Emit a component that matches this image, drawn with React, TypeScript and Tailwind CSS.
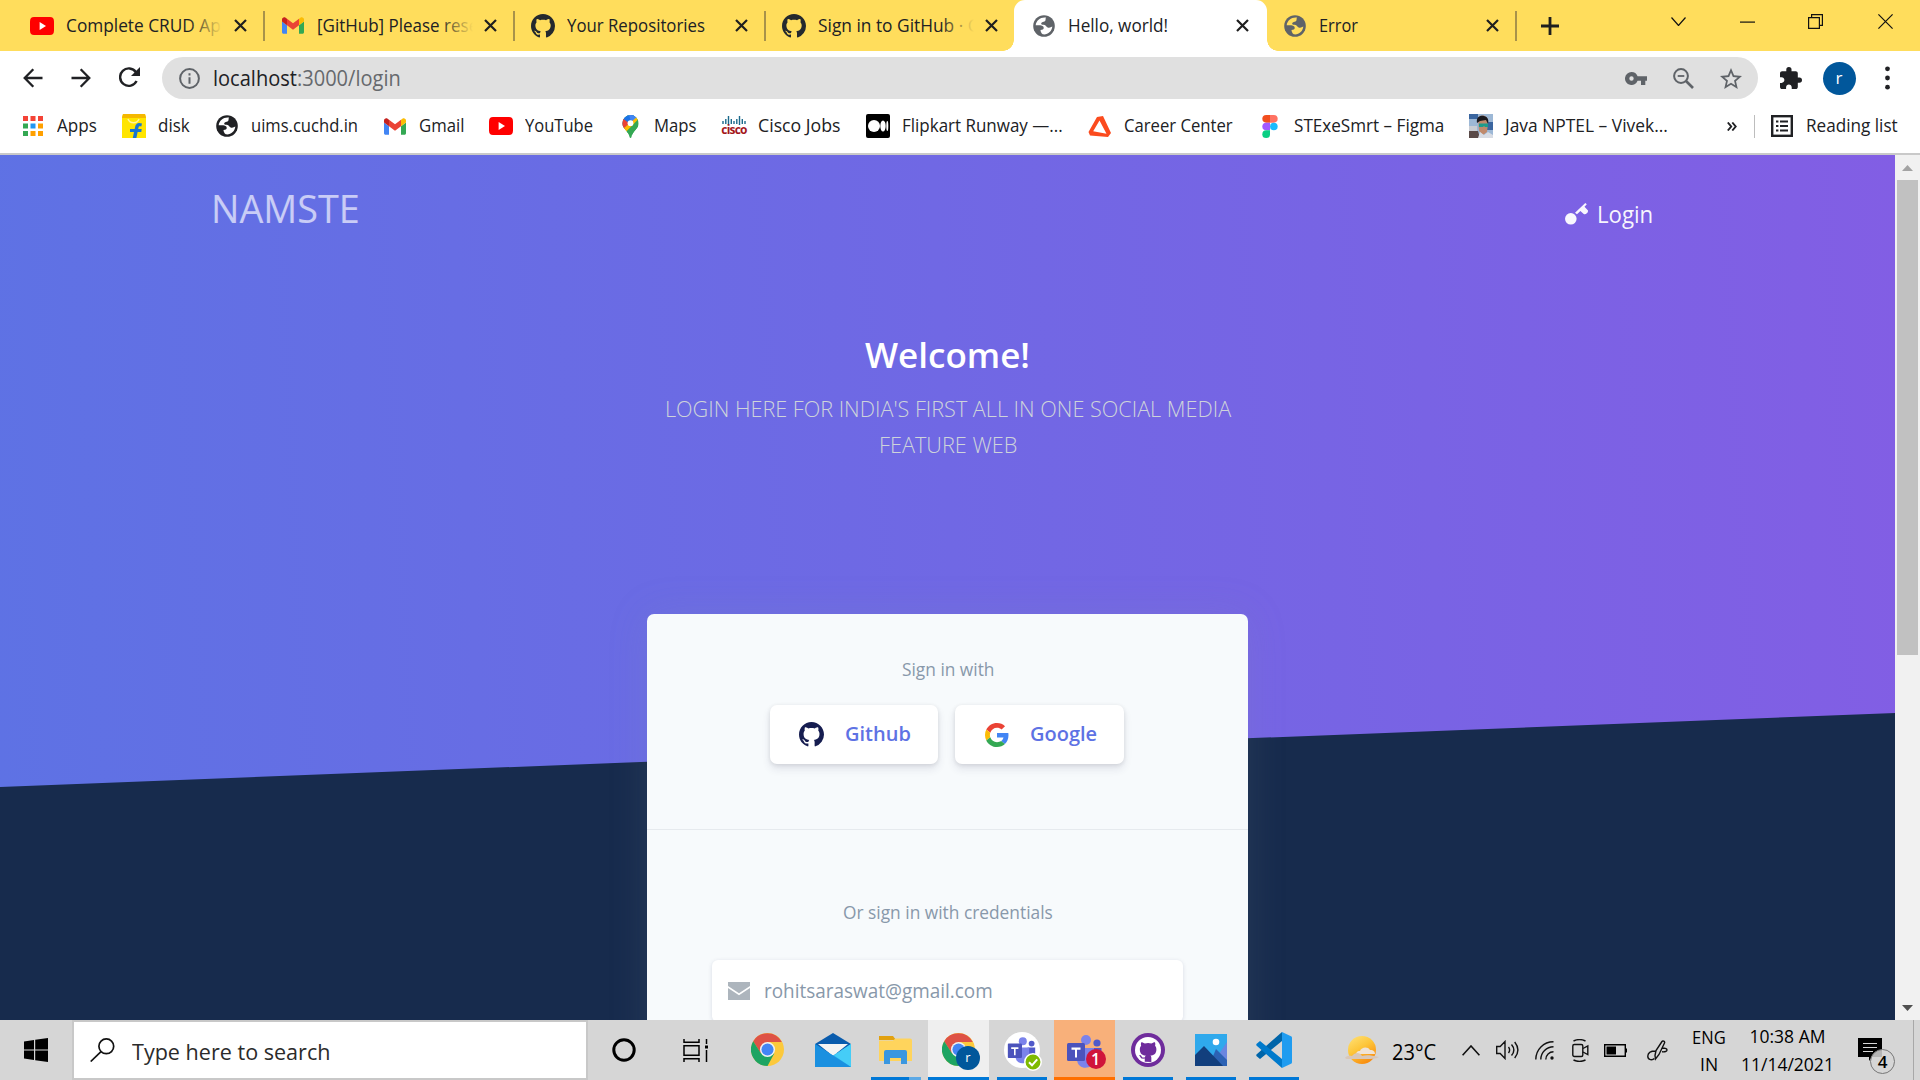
import { useLayoutEffect, useRef, useState } from "react";
import type { ReactNode } from "react";

const MARK =
  "M8 0C3.58 0 0 3.58 0 8c0 3.54 2.29 6.53 5.47 7.59.4.07.55-.17.55-.38 0-.19-.01-.82-.01-1.49-2.01.37-2.53-.49-2.69-.94-.09-.23-.48-.94-.82-1.13-.28-.15-.68-.52-.01-.53.63-.01 1.08.58 1.23.82.72 1.21 1.87.87 2.33.66.07-.52.28-.87.51-1.07-1.78-.2-3.64-.89-3.64-3.95 0-.87.31-1.59.82-2.15-.08-.2-.36-1.02.08-2.12 0 0 .67-.21 2.2.82.64-.18 1.32-.27 2-.27s1.36.09 2 .27c1.53-1.04 2.2-.82 2.2-.82.44 1.1.16 1.92.08 2.12.51.56.82 1.27.82 2.15 0 3.07-1.87 3.75-3.65 3.95.29.25.54.73.54 1.48 0 1.07-.01 1.93-.01 2.2 0 .21.15.46.55.38A8.01 8.01 0 0 0 16 8c0-4.42-3.58-8-8-8z";

/* A single line of text condensed or stretched to a given width. */
function Fit({ w, children, className = "" }: { w: number; children: ReactNode; className?: string }) {
  const ref = useRef<HTMLSpanElement>(null);
  const [k, setK] = useState(1);
  useLayoutEffect(() => {
    if (ref.current && ref.current.offsetWidth) setK(w / ref.current.offsetWidth);
  }, [w]);
  return (
    <span className={`block shrink-0 ${className}`} style={{ width: w }}>
      <span ref={ref} className="inline-block origin-left whitespace-nowrap" style={{ transform: `scaleX(${k})` }}>
        {children}
      </span>
    </span>
  );
}

const YouTube = () => (
  <svg width="24" height="18" viewBox="0 0 24 17" preserveAspectRatio="none">
    <rect width="24" height="17" rx="4" fill="#f00" />
    <path d="M9.600 4.800v7.400L16 8.500z" fill="#fff" />
  </svg>
);

const Gmail = () => (
  <svg width="22" height="17" viewBox="52 42 88 66">
    <path fill="#4285f4" d="M58 108h14V74L52 59v43c0 3.320 2.690 6 6 6" />
    <path fill="#34a853" d="M120 108h14c3.320 0 6-2.690 6-6V59l-20 15" />
    <path fill="#fbbc04" d="M120 48v26l20-15v-8c0-7.420-8.470-11.650-14.400-7.200" />
    <path fill="#ea4335" d="M72 74V48l24 18 24-18v26L96 92" />
    <path fill="#c5221f" d="M52 51v8l20 15V48l-5.600-4.200c-5.940-4.450-14.400-.22-14.400 7.200" />
  </svg>
);

const GitHub = ({ size = 24, color = "#24292e" }: { size?: number; color?: string }) => (
  <svg width={size} height={size} viewBox="0 0 16 16">
    <path fill={color} d={MARK} />
  </svg>
);

const Globe = ({ color, hole }: { color: string; hole: string }) => (
  <svg width="22" height="22" viewBox="0 0 22 22">
    <circle cx="11" cy="11" r="10.800" fill={color} />
    <path
      fill={hole}
      d="M13.200 2.700C8 1.800 3.200 5.300 2.700 10.300c2.100 0 3.900-.3 5.600.1 1.800.4 2.700 1.500 2.400 2.900-.2 1.200-1.200 1.700-3.200 1.700.1 1.600.7 3.200 2.300 4.300 4.900.7 9.200-2.900 9.500-7.700-1.500.9-3.100 1.400-4.700.8-1.500-.6-1.500-1.900-2.900-2.400-1.500-.5-3.200.1-3.500-1.200-.3-1.300 1.300-1.700 2.400-2 1.500-.4 2.100-1.300 2-2.300-.1-.8-.1-1.300.6-1.800z"
    />
  </svg>
);

const Google = () => (
  <svg width="24" height="24" viewBox="0 0 48 48">
    <path fill="#EA4335" d="M24 9.500c3.540 0 6.710 1.220 9.210 3.600l6.850-6.850C35.900 2.380 30.470 0 24 0 14.620 0 6.510 5.380 2.560 13.220l7.980 6.190C12.430 13.720 17.740 9.500 24 9.500z" />
    <path fill="#4285F4" d="M46.980 24.550c0-1.570-.15-3.090-.38-4.550H24v9.020h12.940c-.58 2.960-2.260 5.480-4.780 7.180l7.730 6c4.510-4.180 7.090-10.360 7.090-17.650z" />
    <path fill="#FBBC05" d="M10.530 28.590c-.48-1.450-.76-2.990-.76-4.590s.27-3.140.76-4.590l-7.980-6.190C.92 16.460 0 20.120 0 24c0 3.880.92 7.540 2.560 10.780l7.970-6.190z" />
    <path fill="#34A853" d="M24 48c6.480 0 11.930-2.130 15.890-5.810l-7.730-6c-2.150 1.450-4.920 2.300-8.160 2.300-6.260 0-11.570-4.220-13.470-9.910l-7.980 6.190C6.510 42.620 14.620 48 24 48z" />
  </svg>
);

const Chrome = () => (
  <svg width="33" height="33" viewBox="0 0 48 48">
    <circle cx="24" cy="24" r="24" fill="#fcc93c" />
    <path d="M24 13h20.800A24 24 0 0 0 3.200 12l11.300 18z" fill="#de5246" />
    <path d="M3.200 12A24 24 0 0 0 24 48l9.800-18.200-19.400-.2z" fill="#1da462" />
    <circle cx="24" cy="24" r="11" fill="#f1f1f1" />
    <circle cx="24" cy="24" r="8.800" fill="#4285f4" />
  </svg>
);

const Cross = () => (
  <svg width="13" height="13" viewBox="0 0 13 13" stroke="#1f1f1f" strokeWidth="2.200">
    <path d="M1 1l11 11M12 1L1 12" />
  </svg>
);

type TabProps = { icon: ReactNode; title: string; w: number; active?: boolean; sep?: boolean; fade?: boolean };

function Tab({ icon, title, w, active, sep, fade }: TabProps) {
  return (
    <div className={`relative flex h-[51px] shrink-0 items-center ${active ? "z-10 -ml-[2px] w-[252.500px] rounded-t-[11px] bg-white pl-[18px]" : "w-[250.500px] pl-4"}`}>
      {active && (
        <>
          <div className="absolute bottom-0 -left-[11px] size-[11px] bg-[radial-gradient(circle_at_0_0,transparent_10.500px,white_11px)]" />
          <div className="absolute -right-[11px] bottom-0 size-[11px] bg-[radial-gradient(circle_at_100%_0,transparent_10.500px,white_11px)]" />
        </>
      )}
      <div className="flex w-[24px] shrink-0 justify-center">{icon}</div>
      <div className="relative ml-3 flex w-[156px] overflow-hidden text-[18px]">
        <Fit w={w}>{title}</Fit>
        {fade && <div className="absolute inset-y-0 right-0 w-[34px] bg-linear-to-r from-transparent to-[#ffdd5c]" />}
      </div>
      <div className="ml-[11.500px]">
        <Cross />
      </div>
      {sep && <div className="absolute top-[11px] right-0 h-[30px] w-[2px] bg-[#a8924a]" />}
    </div>
  );
}

function WindowButtons() {
  return (
    <div className="ml-auto flex h-[43px] items-center">
      <svg className="mr-[54px]" width="15" height="9" viewBox="0 0 15 9" fill="none" stroke="#111" strokeWidth="1.200"><path d="M.5.500l7 8 7-8" /></svg>
      <svg className="mr-[53px]" width="15" height="2" viewBox="0 0 15 2"><rect y=".5" width="15" height="1.200" fill="#111" /></svg>
      <svg className="mr-[55px]" width="15" height="15" viewBox="0 0 15 15" fill="none" stroke="#111" strokeWidth="1.200"><path d="M.6 3.600h10.800v10.800H.6zM3.600 3.500V.6h10.800v10.800h-3" /></svg>
      <svg className="mr-[27px]" width="15" height="15" viewBox="0 0 15 15" stroke="#111" strokeWidth="1.200"><path d="M.4.400l14.200 14.200M14.600.4L.4 14.600" /></svg>
    </div>
  );
}

function TabStrip() {
  return (
    <div className="flex h-[51px] bg-[#ffdd5c] pl-[14px]">
      <Tab icon={<YouTube />} title="Complete CRUD App" w={165} sep fade />
      <Tab icon={<Gmail />} title="[GitHub] Please reset" w={167} sep fade />
      <Tab icon={<GitHub />} title="Your Repositories" w={138} sep />
      <Tab icon={<GitHub />} title="Sign in to GitHub · GitHub" w={207} fade />
      <Tab icon={<Globe color="#5f6368" hole="#fff" />} title="Hello, world!" w={100} active />
      <Tab icon={<Globe color="#5f6368" hole="#ffdd5c" />} title="Error" w={39} sep />
      <div className="ml-[23.500px] flex items-center">
        <svg width="18" height="18" viewBox="0 0 18 18" stroke="#1f1f1f" strokeWidth="2.800"><path d="M9 0v18M0 9h18" /></svg>
      </div>
      <WindowButtons />
    </div>
  );
}

function Toolbar() {
  return (
    <div className="flex h-[53px] items-center pl-[23px]">
      <svg width="20" height="20" viewBox="0 0 20 20" fill="none" stroke="#202124" strokeWidth="2.300"><path d="M19.500 10H1.800M10.300 1.200L1.700 10l8.600 8.800" /></svg>
      <svg className="ml-[28px]" width="20" height="20" viewBox="0 0 20 20" fill="none" stroke="#202124" strokeWidth="2.300"><path d="M.5 10h17.700M9.700 1.200l8.600 8.800-8.600 8.800" /></svg>
      <svg className="ml-[28px]" width="21" height="21" viewBox="0 0 21 21"><path d="M17.600 14A8.700 8.700 0 1 1 17 5.200" fill="none" stroke="#202124" strokeWidth="2.400" /><path d="M21 0v9h-9z" fill="#202124" /></svg>
      <div className="mt-px ml-[22px] flex h-[42px] w-[1596px] items-center rounded-full bg-[#e0e0e0] pl-[17px]">
        <svg width="21" height="21" viewBox="0 0 21 21"><circle cx="10.500" cy="10.500" r="9.400" fill="none" stroke="#5f6368" strokeWidth="2" /><path d="M9.500 9.300h2v6.400h-2zM9.500 5.300h2v2.200h-2z" fill="#5f6368" /></svg>
        <div className="ml-[13px] pt-px text-[21px]">
          <Fit w={188}>
            <span className="text-[#202124]">localhost</span><span className="text-[#66696d]">:3000/login</span>
          </Fit>
        </div>
        <div className="ml-auto flex items-center pr-[16px]">
          <svg width="22" height="13" viewBox="0 0 22 13"><path fillRule="evenodd" fill="#5f6368" d="M6.500 0a6.500 6.500 0 1 0 6.100 8.700H16V13h4.300V8.700H22V4.300h-9.400A6.500 6.500 0 0 0 6.500 0zm0 4.300a2.200 2.200 0 1 1 0 4.400 2.200 2.200 0 0 1 0-4.400z" /></svg>
          <svg className="ml-[26px]" width="21" height="21" viewBox="0 0 21 21" fill="none" stroke="#5f6368"><circle cx="8" cy="8" r="6.900" strokeWidth="2" /><path d="M13 13l7 7" strokeWidth="2.600" /><path d="M4.700 8h6.600" strokeWidth="1.800" /></svg>
          <svg className="ml-[26px]" width="22" height="21" viewBox="2 2 20 19"><path fill="#5f6368" d="M22 9.240l-7.190-.62L12 2 9.190 8.630 2 9.240l5.460 4.730L5.820 21 12 17.270 18.180 21l-1.630-7.030L22 9.240zM12 15.400l-3.760 2.270 1-4.280-3.320-2.880 4.380-.38L12 6.100l1.710 4.040 4.380.38-3.320 2.880 1 4.280L12 15.400z" /></svg>
        </div>
      </div>
      <svg className="ml-[22px]" width="22" height="22" viewBox="2 1 21 21"><path fill="#202124" d="M20.500 11H19V7c0-1.100-.9-2-2-2h-4V3.500a2.500 2.500 0 0 0-5 0V5H4c-1.100 0-1.990.9-1.990 2v3.800H3.500c1.490 0 2.700 1.210 2.700 2.700s-1.210 2.700-2.700 2.700H2V20c0 1.100.9 2 2 2h3.800v-1.500c0-1.490 1.210-2.700 2.700-2.700s2.700 1.210 2.700 2.700V22H17c1.100 0 2-.9 2-2v-4h1.500a2.500 2.500 0 0 0 0-5z" /></svg>
      <div className="mt-[2px] ml-[20.500px] flex size-[33px] items-center justify-center rounded-full bg-[#01579b] pb-[2px] text-[17px] text-white">r</div>
      <svg className="ml-[29px]" width="5" height="24" viewBox="0 0 5 24" fill="#202124"><circle cx="2.500" cy="2.800" r="2.400" /><circle cx="2.500" cy="12" r="2.400" /><circle cx="2.500" cy="21.200" r="2.400" /></svg>
    </div>
  );
}

const AppsGrid = () => (
  <svg width="20" height="20" viewBox="0 0 20 20">
    {["#f44336", "#f44336", "#f44336", "#34a853", "#2196f3", "#ffa000", "#34a853", "#ffa000", "#ffa000"].map((c, i) => (
      <rect key={i} x={(i % 3) * 7.5} y={Math.floor(i / 3) * 7.5} width="5" height="5" fill={c} />
    ))}
  </svg>
);

const Flipkart = () => (
  <svg width="24" height="24" viewBox="0 0 24 24">
    <path d="M1 0h22l1 3v21H0V3z" fill="#ffe500" />
    <path d="M1 0h22l1 4H0z" fill="#f5b800" />
    <path d="M6 5c2 5 9 5 11 0" fill="none" stroke="#fff59d" strokeWidth="1.500" />
    <path d="M20 9.500c-4-1.500-6.500 0-7 4l-.3 1.500H8v3h4l-1.200 6h3.600l1.200-6h3.700l.4-3h-3.500l.3-1.500c.2-1.200 1-1.600 2.800-1z" fill="#1976d2" />
  </svg>
);

const MapPin = () => (
  <svg width="17" height="23" viewBox="0 0 17 24">
    <clipPath id="pin"><path d="M8.500 0a8.500 8.500 0 0 1 8.500 8.500c0 6-6.500 8-7.500 14.500-.3 1.300-1.700 1.300-2 0C6.500 16.500 0 14.500 0 8.500A8.500 8.500 0 0 1 8.500 0z" /></clipPath>
    <g clipPath="url(#pin)">
      <path d="M0 0h17v24H0z" fill="#34a853" />
      <path d="M0 14L14 0 0-2z" fill="#1a73e8" />
      <path d="M7 0h10l-7.500 9z" fill="#4285f4" />
      <path d="M0 3l7 5.500L2 15-2 11z" fill="#ea4335" />
      <path d="M0 15l14.500-12.500L18 6 3.500 18z" fill="#fbbc04" />
      <path d="M3.500 18L17 4v20z" fill="#34a853" />
    </g>
    <circle cx="8.500" cy="8.500" r="3" fill="#fff" />
  </svg>
);

const Cisco = () => (
  <div className="flex w-[24px] flex-col items-center">
    <svg width="24" height="9" viewBox="0 0 24 9" stroke="#1b6a8c" strokeWidth="1.400"><path d="M1 5v3M3.800 3v5M6.500 0v9M9.300 3v5M12 5v3M14.800 3v5M17.500 0v9M20.300 3v5M23 5v3" /></svg>
    <span className="h-[11px] text-[12px] leading-[9px] font-bold tracking-[-0.800px] text-[#a3161b]">cisco</span>
  </div>
);

const Medium = () => (
  <svg width="24" height="24" viewBox="0 0 24 24"><rect width="24" height="24" rx="2" fill="#000" /><circle cx="8" cy="12" r="6" fill="#fff" /><ellipse cx="17" cy="12" rx="2.700" ry="5.600" fill="#fff" /><ellipse cx="21.300" cy="12" rx="1" ry="5" fill="#fff" /></svg>
);

const Career = () => (
  <svg width="24" height="21" viewBox="0 0 24 21"><path fill="#fb4b1e" fillRule="evenodd" d="M9 1l6-1 8 17-3 4L2 19.500.5 16zM11.500 4.500L5.200 15.200 18.500 17.800z" /></svg>
);

const Figma = () => (
  <svg width="16" height="23" viewBox="0 0 16 24"><path fill="#f24e1e" d="M8 0H4a4 4 0 0 0 0 8h4z" /><path fill="#ff7262" d="M8 0h4a4 4 0 0 1 0 8H8z" /><path fill="#a259ff" d="M8 8H4a4 4 0 0 0 0 8h4z" /><circle cx="12" cy="12" r="4" fill="#1abcfe" /><path fill="#0acf83" d="M8 16H4a4 4 0 1 0 4 4z" /></svg>
);

const Portrait = () => (
  <svg width="24" height="24" viewBox="0 0 24 24">
    <rect width="24" height="24" fill="#9db8d6" />
    <path d="M0 0h9v5H0zM18 8h6v8h-6z" fill="#3b66a0" />
    <path d="M0 12h8v5H0z" fill="#c9cdd4" />
    <path d="M0 17h9l2 7H0z" fill="#5a4a48" />
    <path d="M9 4c4-5 11-2 10 5l-1 9-4 3-4-4z" fill="#c08a6c" />
    <path d="M8 9c-1-6 3-8 7-7s5 4 4 8l-2-4-6 1z" fill="#1b1a20" />
    <path d="M10 9.500h9v3.500h-3l-1-1-1 1h-4z" fill="#1e9c8c" />
    <path d="M9 24l2-6 4 3 4-3 5 3v3z" fill="#d8dce4" />
  </svg>
);

const BOOKMARKS: { icon: ReactNode; label: string; w: number }[] = [
  { icon: <AppsGrid />, label: "Apps", w: 40 },
  { icon: <Flipkart />, label: "disk", w: 32 },
  { icon: <Globe color="#202124" hole="#fff" />, label: "uims.cuchd.in", w: 107 },
  { icon: <Gmail />, label: "Gmail", w: 45 },
  { icon: <YouTube />, label: "YouTube", w: 68 },
  { icon: <MapPin />, label: "Maps", w: 43 },
  { icon: <Cisco />, label: "Cisco Jobs", w: 83 },
  { icon: <Medium />, label: "Flipkart Runway —...", w: 161 },
  { icon: <Career />, label: "Career Center", w: 108.5 },
  { icon: <Figma />, label: "STExeSmrt – Figma", w: 150.5 },
  { icon: <Portrait />, label: "Java NPTEL – Vivek...", w: 163 },
];

function Bookmarks() {
  return (
    <div className="flex h-[51px] items-center border-b-2 border-[#c9c9c9] pb-[5px] pl-[21px] text-[17.500px] text-[#202124]">
      {BOOKMARKS.map((b) => (
        <div key={b.label} className="mr-[25px] flex items-center last:mr-0">
          <div className="mr-3 flex w-[24px] shrink-0 justify-center">{b.icon}</div>
          <Fit w={b.w} className="pb-px">{b.label}</Fit>
        </div>
      ))}
      <svg className="ml-auto" width="10" height="9" viewBox="0 0 10 9" fill="none" stroke="#202124" strokeWidth="1.900"><path d="M.8.500l3.400 4-3.400 4M5.300.500l3.400 4-3.400 4" /></svg>
      <div className="ml-[17px] h-[23px] w-px bg-[#bdbdbd]" />
      <svg className="ml-[16px]" width="22" height="22" viewBox="0 0 22 22"><rect x="1.200" y="1.200" width="19.600" height="19.600" fill="none" stroke="#202124" strokeWidth="2.400" /><path d="M5 6.500h2.400M9 6.500h8M5 11h2.400M9 11h8M5 15.500h2.400M9 15.500h8" stroke="#202124" strokeWidth="2" /></svg>
      <Fit w={92} className="mr-[22px] ml-[13px] pb-px">Reading list</Fit>
    </div>
  );
}

function LoginPage() {
  return (
    <div className="h-[865px] w-[1895px] overflow-hidden bg-[#172b4d] font-['Open_Sans',sans-serif]">
      <div className="h-[632px] bg-[linear-gradient(87deg,#5e72e4_0%,#825ee4_100%)] [clip-path:polygon(0_0,100%_0,100%_558px,0_632px)]">
        <div className="flex h-[108px] items-center justify-between pr-[242px] pl-[211px]">
          <Fit w={149} className="text-[37.500px] leading-[50px] text-white/65">NAMSTE</Fit>
          <div className="flex items-center pt-[9px] text-[23px] leading-[30px] text-white/95">
            <svg className="mr-[9px]" width="23" height="22" viewBox="0 0 23 22" fill="currentColor"><circle cx="5.800" cy="15.800" r="5.800" /><path d="M10 9.700L20.300 0l1.500 1.200-2.300 2.500L23 7.600c.3 2.300-2.400 4.300-4.300 3.400l-3.300-3-3.400 3.300z" /></svg>
            <Fit w={56}>Login</Fit>
          </div>
        </div>
        <div className="flex flex-col items-center pt-[65px]">
          <Fit w={165} className="text-[35px] leading-[54px] font-semibold text-white">Welcome!</Fit>
          <div className="mt-[9px] flex flex-col items-center text-[22.500px] leading-[36px] font-light text-[#ced4da]">
            <Fit w={566}>LOGIN HERE FOR INDIA'S FIRST ALL IN ONE SOCIAL MEDIA</Fit>
            <Fit w={138}>FEATURE WEB</Fit>
          </div>
        </div>
      </div>
      <div className="relative mx-auto -mt-[173px] h-[600px] w-[601px] rounded-[7px] bg-[#f7fafc] shadow-[0_0_40px_rgba(136,152,170,0.15)]">
        <div className="flex h-[216px] flex-col items-center border-b border-[#e6eaee] pt-[42px]">
          <Fit w={92} className="text-[17.500px] leading-[26px] text-[#8898aa]">Sign in with</Fit>
          <div className="mt-[23px] mr-[2px] flex gap-[17px]">
            <div className="flex h-[59px] w-[168px] items-center rounded-[7px] bg-white pl-[29px] shadow-[0_5px_8px_rgba(50,50,93,0.11),0_1px_4px_rgba(0,0,0,0.1)]">
              <GitHub size={25} color="#161d50" />
              <Fit w={66} className="ml-[21px] pb-[2px] text-[19.700px] font-semibold text-[#5e72e4]">Github</Fit>
            </div>
            <div className="flex h-[59px] w-[169px] items-center rounded-[7px] bg-white pl-[30px] shadow-[0_5px_8px_rgba(50,50,93,0.11),0_1px_4px_rgba(0,0,0,0.1)]">
              <Google />
              <Fit w={67} className="ml-[21px] pb-[2px] text-[19.700px] font-semibold text-[#5e72e4]">Google</Fit>
            </div>
          </div>
        </div>
        <div className="flex flex-col items-center pt-[69px]">
          <Fit w={210} className="text-[17.500px] leading-[26px] text-[#8898aa]">Or sign in with credentials</Fit>
          <div className="mt-[35px] flex h-[62px] w-[471px] items-center rounded-[6px] bg-white pl-[16px] shadow-[0_1px_4px_rgba(50,50,93,0.15)]">
            <svg width="22" height="18" viewBox="0 0 22 18" fill="#adb5bd"><path d="M0 0h22v4L11 11.200 0 4z" /><path d="M0 6l11 7.200L22 6v12H0z" /></svg>
            <Fit w={229} className="ml-[14px] text-[20px] text-[#8898aa]">rohitsaraswat@gmail.com</Fit>
          </div>
        </div>
      </div>
    </div>
  );
}

function Scrollbar() {
  return (
    <div className="flex h-[865px] w-[25px] flex-col items-center bg-[#f1f1f1]">
      <div className="flex h-[25px] items-center"><svg width="11" height="6" viewBox="0 0 11 6"><path d="M5.500 0L11 6H0z" fill="#a3a3a3" /></svg></div>
      <div className="h-[475px] w-[21px] bg-[#c1c1c1]" />
      <div className="mt-auto flex h-[25px] items-center"><svg width="11" height="6" viewBox="0 0 11 6"><path d="M5.500 6L11 0H0z" fill="#505050" /></svg></div>
    </div>
  );
}

const Teams = () => (
  <svg width="36" height="34" viewBox="0 0 36 34">
    <circle cx="30" cy="9" r="3.600" fill="#5059c9" />
    <circle cx="19" cy="6" r="5" fill="#7b83eb" />
    <path d="M25 14h9.500v9c0 6-6 8-9 4z" fill="#5059c9" />
    <path d="M10 14h17v11c0 11-16 12-17 1z" fill="#7b83eb" />
    <rect x="0" y="9" width="18" height="18" rx="1.500" fill="#4b53bc" />
    <path d="M4.500 13.500h9v2.200H10v7.800H8v-7.800H4.500z" fill="#fff" />
  </svg>
);

function TaskButton({ children, line = "", bg = "" }: { children: ReactNode; line?: string; bg?: string }) {
  return (
    <div className="flex h-[60px] w-[63px] shrink-0 justify-center">
      <div className={`flex w-[61px] flex-col items-center ${bg}`}>
        <div className="flex h-[57px] items-center justify-center pt-[2px]">{children}</div>
        <div className={`h-[3px] ${line}`} />
      </div>
    </div>
  );
}

function Taskbar() {
  return (
    <div className="flex h-[60px] items-center bg-[#d6d6d6] text-black">
      <svg className="ml-[24px]" width="24" height="24" viewBox="0 0 24 24"><path d="M0 3.400L10 2v9.500H0zM11.200 1.800L24 0v11.500H11.200zM0 12.600h10V22L0 20.600zM11.200 12.600H24V24l-12.800-1.800z" /></svg>
      <div className="ml-[24px] flex h-[60px] w-[516px] items-center border-2 border-[#c8c8c8] bg-white pl-[16px]">
        <svg width="25" height="24" viewBox="0 0 25 24" fill="none" stroke="#111" strokeWidth="1.700"><circle cx="16.300" cy="8.300" r="7.400" /><path d="M11 13.700L.7 23.500" /></svg>
        <Fit w={198} className="ml-[17px] pt-[3px] text-[22px] text-[#2b2b2b]">Type here to search</Fit>
      </div>
      <svg className="ml-[24px]" width="24" height="24" viewBox="0 0 24 24"><circle cx="12" cy="12" r="10.200" fill="none" stroke="#000" strokeWidth="3" /></svg>
      <svg className="ml-[47px]" width="25" height="23" viewBox="0 0 25 23" fill="none" stroke="#000" strokeWidth="1.500"><path d="M1 0v3.200h15V0M1 6.800h15v9.500H1zM1 23v-3.200h15V23M23.500 0v5M23.500 11v12" /><rect x="22" y="6.500" width="3" height="3" fill="#000" stroke="none" /></svg>
      <div className="ml-[28px] flex gap-x-0">
        <TaskButton><Chrome /></TaskButton>
        <div className="ml-[2px]" />
        <TaskButton>
          <svg width="36" height="34" viewBox="0 0 36 34"><path d="M0 11L18 0l18 11-9 9H9z" fill="#0a5cad" /><path d="M3 11h30L18 23z" fill="#f4f4f4" /><path d="M0 11v23h36z" fill="#1788d8" /><path d="M36 11v23H0z" fill="#2bb3f0" /><path d="M36 11L19 22.500l17 11.500z" fill="#45cdf7" /><path d="M0 11l36 23H0z" fill="#1a90e0" /></svg>
        </TaskButton>
        <TaskButton line="w-[50px] bg-[linear-gradient(90deg,#0078d7_76%,#5ca9e6_76%)]">
          <svg width="33" height="28" viewBox="0 0 33 28"><path d="M0 0h14l3 4H0z" fill="#e2a10f" /><path d="M0 4.500h14l2.500-2H31a2 2 0 0 1 2 2V25H0z" fill="#ffd45c" /><path d="M5 28V16a2 2 0 0 1 2-2h19a2 2 0 0 1 2 2v12h-6v-6H11v6z" fill="#3a97e0" /></svg>
        </TaskButton>
        <TaskButton bg="bg-[#efefef]" line="w-full bg-[#0078d7]">
          <div className="relative"><Chrome /><div className="absolute top-[13px] left-[14px] flex size-[24px] items-center justify-center rounded-full bg-[#01579b] text-[13px] text-white">r</div></div>
        </TaskButton>
        <TaskButton line="w-[50px] bg-[#0078d7]">
          <div className="relative flex size-[36px] items-center justify-center rounded-full bg-white">
            <div className="scale-[0.800]"><Teams /></div>
            <svg className="absolute top-[21px] left-[20px]" width="18" height="18" viewBox="0 0 18 18"><circle cx="9" cy="9" r="8.200" fill="#7fba00" stroke="#fff" strokeWidth="1.500" /><path d="M5 9.300l3 3 5.200-6" fill="none" stroke="#fff" strokeWidth="2" /></svg>
          </div>
        </TaskButton>
        <TaskButton bg="bg-[#f8b07a]" line="w-full bg-[#ff6f00]">
          <div className="relative pt-[2px]"><Teams /><div className="absolute top-[17px] left-[19px] flex size-[20px] items-center justify-center rounded-full bg-[#d0153a] text-[16px] leading-none font-semibold text-white">1</div></div>
        </TaskButton>
        <TaskButton line="w-[50px] bg-[#0078d7]">
          <div className="flex size-[34px] items-center justify-center rounded-full bg-[#6f2c9c]">
            <svg width="26" height="26" viewBox="0 0 16 16"><circle cx="8" cy="8" r="8" fill="#fff" /><path fill="#6f2c9c" d="M6 15.300v-2c-2 .4-2.500-.5-2.700-1-.1-.2-.5-.9-.8-1.100.7-.4 1.200.2 1.500.6.700 1.200 1.500.9 2.100.700.07-.52.28-.87.51-1.070-1.780-.2-3.640-.89-3.640-3.950 0-.87.31-1.590.82-2.150-.08-.2-.36-1.020.08-2.120 0 0 .67-.21 2.200.82a7.500 7.500 0 0 1 4 0c1.530-1.040 2.200-.82 2.200-.82.44 1.100.16 1.920.08 2.120.51.56.82 1.270.82 2.150 0 3.070-1.870 3.750-3.650 3.950.29.25.54.73.54 1.480v2.400z" /></svg>
          </div>
        </TaskButton>
        <TaskButton line="w-[50px] bg-[#0078d7]">
          <svg width="32" height="32" viewBox="0 0 32 32"><path d="M0 0h32v32H0z" fill="#2fa9ec" /><path d="M32 8v24H16z" fill="#6a86e0" /><path d="M21 15l11 11v6H14z" fill="#2c62b4" /><path d="M0 21l9-9 19 20H0z" fill="#123f7d" /><circle cx="21" cy="8" r="3.300" fill="#fff" /></svg>
        </TaskButton>
        <TaskButton line="w-[50px] bg-[#0078d7]">
          <svg width="36" height="36" viewBox="0 0 36 36"><path d="M26 0v9L4 27l-3-2.500c-1-.8-1-1.700 0-2.500z" fill="#0065a9" /><path d="M26 36v-9L4 9l-3 2.500c-1 .8-1 1.700 0 2.500z" fill="#007acc" /><path d="M26 0l9 4.300c.7.300 1 .8 1 1.500v24.400c0 .7-.3 1.200-1 1.500L26 36z" fill="#1f9cf0" /></svg>
        </TaskButton>
      </div>
      <svg className="ml-[40px]" width="34" height="29" viewBox="0 0 34 29">
        <defs><linearGradient id="sun" x1="0" y1="0" x2=".6" y2="1"><stop offset="0" stopColor="#ffe27a" /><stop offset=".5" stopColor="#fdc63a" /><stop offset="1" stopColor="#f98e10" /></linearGradient></defs>
        <circle cx="17" cy="14" r="14" fill="url(#sun)" /><path d="M11 18c1-3 2-3 4-3 1-4 8-5 10-1 4 0 5 2 5 4z" fill="#efe3d6" /><path d="M0 22c2-3 6-2 7-2 3-4 8-4 10 0 4-1 8-1 17 1-3 2-8 2-13 2H5c-3 0-4 0-5-1z" fill="#d9c7b8" />
      </svg>
      <Fit w={44} className="ml-[13px] pt-[5px] text-[21px]">23°C</Fit>
      <svg className="ml-[26px]" width="18" height="11" viewBox="0 0 18 11" fill="none" stroke="#111" strokeWidth="1.600"><path d="M.6 10.300L9 1l8.400 9.300" /></svg>
      <svg className="ml-[16px]" width="23" height="20" viewBox="0 0 23 20" fill="none" stroke="#111" strokeWidth="1.400"><path d="M.7 6.500h3.500L9 1.500v17l-4.800-5H.7zM12.500 7c1.500 2 1.500 4 0 6M15.500 4.500c3 3.500 3 7.500 0 11M18.700 2c4 5 4 11 0 16" /></svg>
      <svg className="ml-[16px]" width="19" height="19" viewBox="0 0 19 19" fill="none" stroke="#111" strokeWidth="1.400"><path d="M.8 18.500C.8 8.500 8.500.8 18.500.8M5.800 18.500C5.800 11.500 11.500 5.800 18.500 5.800M10.800 18.500c0-4.200 3.500-7.700 7.700-7.700" /><circle cx="17" cy="17" r="1.700" fill="#111" stroke="none" /></svg>
      <svg className="ml-[18px]" width="17" height="23" viewBox="0 0 17 23" fill="none" stroke="#111" strokeWidth="1.400"><rect x=".8" y="5.500" width="10" height="12" rx="1.500" /><path d="M11 9.500l4.800-2.500v8.500L11 13M1.500 2C5 .3 10 .3 13.500 2M1.500 21c3.500 1.700 8.500 1.700 12 0" /></svg>
      <svg className="ml-[15px]" width="23" height="13" viewBox="0 0 23 13"><path d="M.7.700h20.600v11.600H.7z" fill="none" stroke="#000" strokeWidth="1.400" /><path d="M2.500 2.500H12v8H2.500zM21.500 4.500H23v4h-1.500z" /></svg>
      <svg className="ml-[20px]" width="21" height="21" viewBox="0 0 21 21" fill="none" stroke="#111" strokeWidth="1.400"><path d="M8 15.500l1-5L15 1.500c.8-1.200 3.200 0 2.500 1.500L12 14.500 8.500 19zM15 8c3 0 5 .5 5 2s-2 2-5 1.800M8.500 11c-4 0-7.500 1.500-7.700 5-.2 4.500 5 4.200 6.500 2.500" /></svg>
      <div className="ml-[24px] flex flex-col items-center pt-px text-[17.500px] leading-[27px]">
        <Fit w={34}>ENG</Fit>
        <Fit w={18}>IN</Fit>
      </div>
      <div className="ml-[15px] flex flex-col items-center text-[17.500px] leading-[28px]">
        <Fit w={76}>10:38 AM</Fit>
        <Fit w={93}>11/14/2021</Fit>
      </div>
      <div className="relative ml-auto w-[55px]">
        <svg width="24" height="24" viewBox="0 0 24 24"><path d="M0 0h24v19H14l-3 4v-4H0z" /><path d="M5 5.500h14M5 9.500h14M5 13.500h10" stroke="#d6d6d6" strokeWidth="1.200" /></svg>
        <div className="absolute top-[11px] left-[12px] flex size-[25px] items-center justify-center rounded-full border border-[#777] bg-[#d6d6d6]/85 text-[17px] leading-none font-semibold">4</div>
      </div>
      <div className="mr-[6px] h-[60px] w-px bg-[#a8a8a8]" />
    </div>
  );
}

export default function App() {
  return (
    <div className="h-[1080px] w-[1920px] overflow-hidden bg-white font-['Open_Sans',sans-serif] text-[#202124]">
      <TabStrip />
      <Toolbar />
      <Bookmarks />
      <div className="flex">
        <LoginPage />
        <Scrollbar />
      </div>
      <Taskbar />
    </div>
  );
}
